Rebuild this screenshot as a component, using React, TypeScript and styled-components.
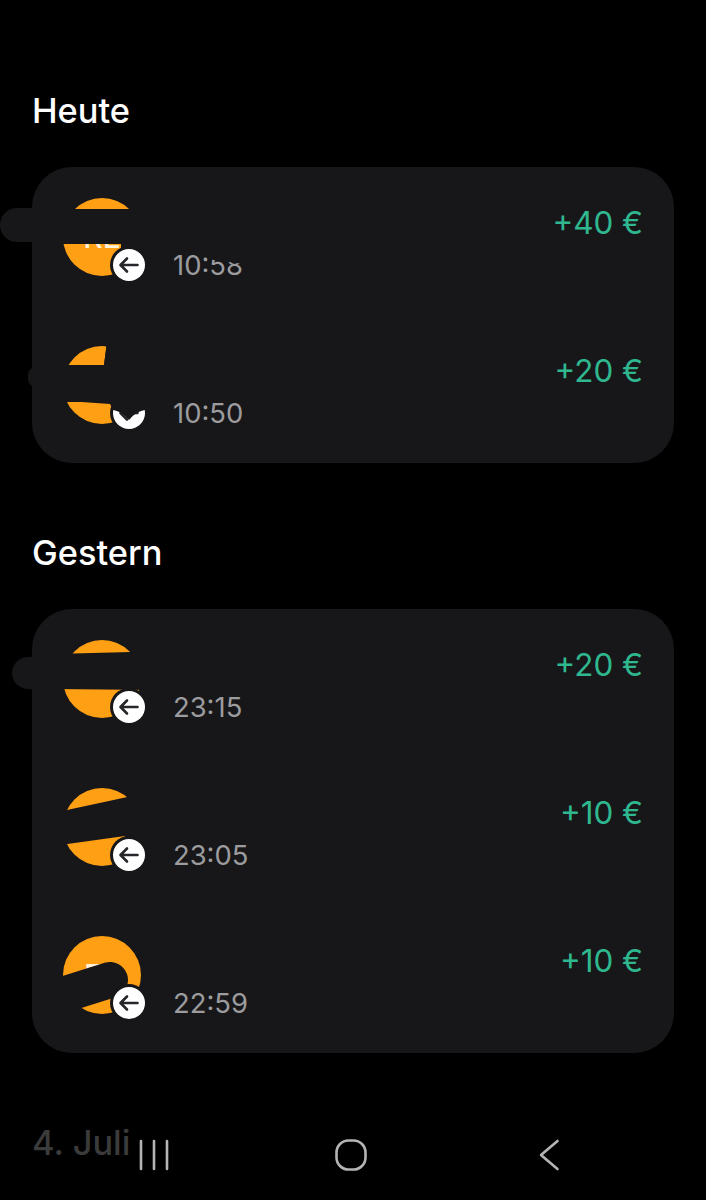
import React from "react";
import styled, { createGlobalStyle } from "styled-components";

const CARD = "#17171a";

const Global = createGlobalStyle`
  html, body { margin: 0; padding: 0; background: #000; }
  body { font-family: Inter, "Liberation Sans", sans-serif; }
`;

const Page = styled.div`
  position: relative;
  width: 706px;
  height: 1200px;
  overflow: hidden;
  background: #000;
  padding: 21px 32px 0;
  box-sizing: border-box;
`;

const Section = styled.section`
  margin-top: 70px;
`;

const Heading = styled.h2<{ $dim?: boolean }>`
  margin: 0 0 36px;
  height: 40px;
  font-size: 34.4px;
  line-height: 40px;
  font-weight: 500;
  letter-spacing: 0;
  color: ${(p) => (p.$dim ? "#3b3b3b" : "#ffffff")};
`;

const Card = styled.div`
  background: ${CARD};
  border-radius: 40px;
  width: 642px;
`;

const Row = styled.div`
  position: relative;
  height: 148px;
  box-sizing: border-box;
  padding: 31px 31px 0 31px;
  display: grid;
  grid-template-columns: 78px 1fr auto;
  column-gap: 32px;
  align-items: start;
`;

const AvatarArt = styled.svg`
  display: block;
  width: 78px;
  height: 78px;
  overflow: visible;
`;

const AvatarText = styled.text`
  font-family: Inter, sans-serif;
  font-size: 30px;
  font-weight: 500;
  fill: #fff2d8;
`;

const Time = styled.div`
  position: relative;
  margin-top: 47px;
  font-size: 27.4px;
  line-height: 40px;
  color: #9c9c9e;
`;

const TimeSmear = styled.span`
  position: absolute;
  left: 35px;
  top: 2px;
  width: 42px;
  height: 15px;
  background: ${CARD};
  transform: rotate(8deg);
`;

const Amount = styled.div`
  margin-top: 5px;
  font-size: 31.4px;
  line-height: 40px;
  color: #2fb88f;
`;

const Smear = styled.div<{ $top: number; $left: number; $width: number; $height: number }>`
  position: absolute;
  top: ${(p) => p.$top}px;
  left: ${(p) => p.$left}px;
  width: ${(p) => p.$width}px;
  height: ${(p) => p.$height}px;
  background: ${CARD};
  border-radius: ${(p) => p.$height / 2}px 0 0 ${(p) => p.$height / 2}px;
`;

const NavBar = styled.nav`
  position: absolute;
  left: 0;
  right: 0;
  bottom: 29px;
  height: 32px;
  display: grid;
  grid-template-columns: 139px 30px 166px 32px 172px 21px;
`;

const NavIcon = styled.svg<{ $col: number }>`
  grid-column: ${(p) => p.$col};
  display: block;
  width: 100%;
  height: 32px;
  fill: none;
  stroke: #b4b4b4;
  stroke-width: 2.6;
  stroke-linecap: round;
  stroke-linejoin: round;
`;

const Cover = styled.path`
  fill: ${CARD};
`;

type Spec = {
  time: string;
  amount: string;
  letters?: string;
  under: React.ReactNode;
  over?: React.ReactNode;
  smear?: { top: number; left: number; width: number; height: number };
  cutTime?: boolean;
};

const Badge = () => (
  <>
    <circle cx="66" cy="67" r="19" fill={CARD} />
    <circle cx="66" cy="67" r="16" fill="#ffffff" />
    <path
      d="M74.5 67H58M64 60.5L57.5 67L64 73.5"
      fill="none"
      stroke="#26262b"
      strokeWidth="2.6"
      strokeLinecap="round"
      strokeLinejoin="round"
    />
  </>
);

const Avatar = ({ s }: { s: Spec }) => (
  <AvatarArt viewBox="0 0 78 78">
    <circle cx="39" cy="39" r="39" fill="#ff9f14" />
    {s.letters && (
      <AvatarText x="39" y="50" textAnchor="middle">
        {s.letters}
      </AvatarText>
    )}
    {s.under}
    <Badge />
    {s.over}
  </AvatarArt>
);

const heute: Spec[] = [
  {
    time: "10:58",
    amount: "+40 €",
    letters: "RE",
    cutTime: true,
    smear: { top: 41, left: -32, width: 34, height: 34 },
    under: <Cover d="M-10 11H90V52H58V46H-10Z" />,
  },
  {
    time: "10:50",
    amount: "+20 €",
    smear: { top: 52, left: -4, width: 8, height: 20 },
    under: <Cover d="M44 -4H90V56H-10V19H41Z" />,
    over: <Cover d="M-10 19H41L44 -4H90V64H82C76 65 71 68 66 74C61 68 56 65 50 64L47 58L-10 54Z" />,
  },
];

const gestern: Spec[] = [
  {
    time: "23:15",
    amount: "+20 €",
    smear: { top: 48, left: -20, width: 22, height: 32 },
    under: <Cover d="M-10 14L68 12L90 16V50L-10 49Z" />,
  },
  {
    time: "23:05",
    amount: "+10 €",
    under: <Cover d="M-10 25L90 3.5V54H64L62 48L-10 58Z" />,
  },
  {
    time: "22:59",
    amount: "+10 €",
    letters: "FE",
    under: (
      <path
        d="M-10 62L47 44"
        stroke={CARD}
        strokeWidth="36"
        strokeLinecap="round"
        fill="none"
      />
    ),
  },
];

const TxRow = ({ s }: { s: Spec }) => (
  <Row>
    {s.smear && <Smear $top={s.smear.top} $left={s.smear.left} $width={s.smear.width} $height={s.smear.height} />}
    <Avatar s={s} />
    <Time>
      {s.time}
      {s.cutTime && <TimeSmear />}
    </Time>
    <Amount>{s.amount}</Amount>
  </Row>
);

export default function App() {
  return (
    <Page>
      <Global />
      <Section>
        <Heading>Heute</Heading>
        <Card>
          {heute.map((s) => (
            <TxRow key={s.time} s={s} />
          ))}
        </Card>
      </Section>
      <Section>
        <Heading>Gestern</Heading>
        <Card>
          {gestern.map((s) => (
            <TxRow key={s.time} s={s} />
          ))}
        </Card>
      </Section>
      <Section>
        <Heading $dim>4. Juli</Heading>
      </Section>
      <NavBar>
        <NavIcon $col={2} viewBox="0 0 30 32">
          <path d="M2 2V30M15 2V30M28 2V30" />
        </NavIcon>
        <NavIcon $col={4} viewBox="0 0 32 32">
          <rect x="1.5" y="1.5" width="29" height="29" rx="12" />
        </NavIcon>
        <NavIcon $col={6} viewBox="0 0 21 32">
          <path d="M18.5 2L2 16L18.5 30" />
        </NavIcon>
      </NavBar>
    </Page>
  );
}
